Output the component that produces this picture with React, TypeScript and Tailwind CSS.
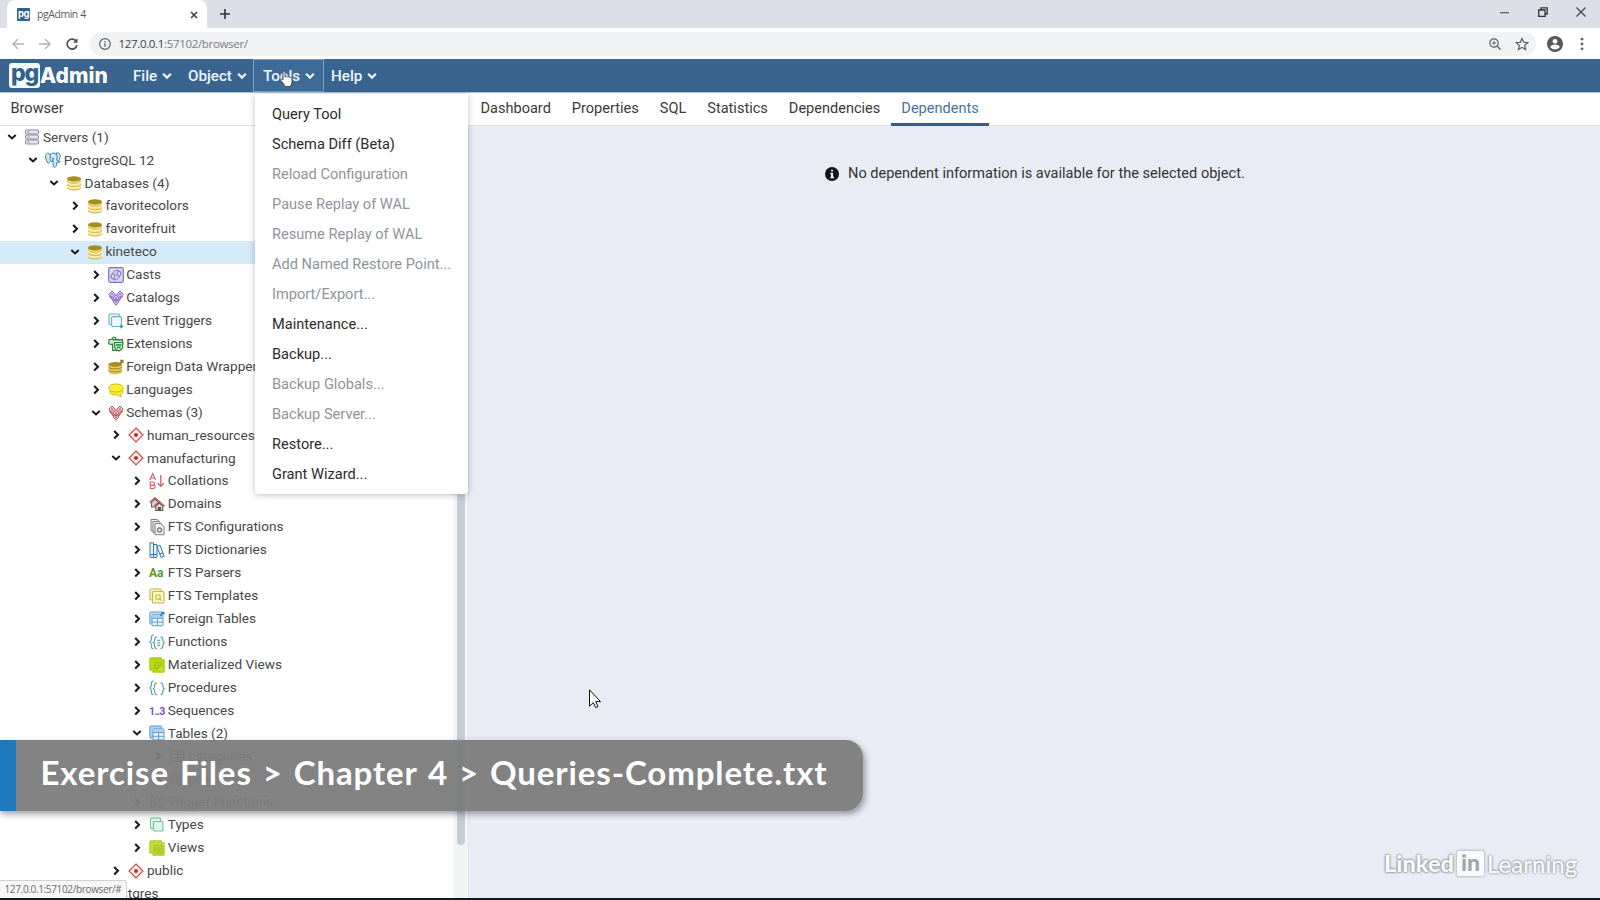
import type { ReactNode } from 'react';

type IconName =
  | 'servers' | 'postgres' | 'database' | 'casts' | 'catalogs' | 'events' | 'extensions' | 'fdw' | 'languages'
  | 'schemas' | 'schema' | 'collations' | 'domains' | 'ftsconf' | 'ftsdict' | 'ftsparser' | 'ftstemplate'
  | 'ftables' | 'functions' | 'mviews' | 'procedures' | 'sequences' | 'tables' | 'table' | 'triggers' | 'types' | 'views';

type Node = { level: number; open?: boolean; icon: IconName; label: string; selected?: boolean };

const tree: Node[] = [
  { level: 0, open: true, icon: 'servers', label: 'Servers (1)' },
  { level: 1, open: true, icon: 'postgres', label: 'PostgreSQL 12' },
  { level: 2, open: true, icon: 'database', label: 'Databases (4)' },
  { level: 3, icon: 'database', label: 'favoritecolors' },
  { level: 3, icon: 'database', label: 'favoritefruit' },
  { level: 3, open: true, icon: 'database', label: 'kineteco', selected: true },
  { level: 4, icon: 'casts', label: 'Casts' },
  { level: 4, icon: 'catalogs', label: 'Catalogs' },
  { level: 4, icon: 'events', label: 'Event Triggers' },
  { level: 4, icon: 'extensions', label: 'Extensions' },
  { level: 4, icon: 'fdw', label: 'Foreign Data Wrappers' },
  { level: 4, icon: 'languages', label: 'Languages' },
  { level: 4, open: true, icon: 'schemas', label: 'Schemas (3)' },
  { level: 5, icon: 'schema', label: 'human_resources' },
  { level: 5, open: true, icon: 'schema', label: 'manufacturing' },
  { level: 6, icon: 'collations', label: 'Collations' },
  { level: 6, icon: 'domains', label: 'Domains' },
  { level: 6, icon: 'ftsconf', label: 'FTS Configurations' },
  { level: 6, icon: 'ftsdict', label: 'FTS Dictionaries' },
  { level: 6, icon: 'ftsparser', label: 'FTS Parsers' },
  { level: 6, icon: 'ftstemplate', label: 'FTS Templates' },
  { level: 6, icon: 'ftables', label: 'Foreign Tables' },
  { level: 6, icon: 'functions', label: 'Functions' },
  { level: 6, icon: 'mviews', label: 'Materialized Views' },
  { level: 6, icon: 'procedures', label: 'Procedures' },
  { level: 6, icon: 'sequences', label: 'Sequences' },
  { level: 6, open: true, icon: 'tables', label: 'Tables (2)' },
  { level: 7, icon: 'table', label: 'categories' },
  { level: 7, icon: 'table', label: 'products' },
  { level: 6, icon: 'triggers', label: 'Trigger Functions' },
  { level: 6, icon: 'types', label: 'Types' },
  { level: 6, icon: 'views', label: 'Views' },
  { level: 5, icon: 'schema', label: 'public' },
  { level: 3, icon: 'database', label: 'postgres' },
];

const menuItems: { label: string; disabled?: boolean }[] = [
  { label: 'Query Tool' },
  { label: 'Schema Diff (Beta)' },
  { label: 'Reload Configuration', disabled: true },
  { label: 'Pause Replay of WAL', disabled: true },
  { label: 'Resume Replay of WAL', disabled: true },
  { label: 'Add Named Restore Point...', disabled: true },
  { label: 'Import/Export...', disabled: true },
  { label: 'Maintenance...' },
  { label: 'Backup...' },
  { label: 'Backup Globals...', disabled: true },
  { label: 'Backup Server...', disabled: true },
  { label: 'Restore...' },
  { label: 'Grant Wizard...' },
];

const tabs = ['Dashboard', 'Properties', 'SQL', 'Statistics', 'Dependencies', 'Dependents'];

const disks = (
  <>
    <path d="M1 3.8v8.6c0 1.7 3.1 2.8 7 2.8s7-1.1 7-2.8V3.8z" fill="#f3e28a" />
    <path d="M1 7.2c1 1.4 3.7 2 7 2s6-.6 7-2M1 10.7c1 1.4 3.7 2 7 2s6-.6 7-2" fill="none" stroke="#fffbe0" strokeWidth="1.1" />
    <path d="M1 6.2c1 1.4 3.7 2 7 2s6-.6 7-2M1 9.7c1 1.4 3.7 2 7 2s6-.6 7-2M1 13c1 1.4 3.7 2 7 2s6-.6 7-2" fill="none" stroke="#cdb44a" strokeWidth=".9" />
    <ellipse cx="8" cy="3.9" rx="7" ry="2.7" fill="#a98c1a" />
  </>
);

const cluster = (line: string, fill: string) => (
  <g fill={fill} stroke={line} strokeWidth="1">
    <path d="M1.500 5.500 8 14 14.500 5.500" fill="none" strokeWidth="1.600" />
    <path d="M4 1 7.200 4.200 4 7.400.800 4.200zM12 1l3.200 3.200L12 7.400 8.800 4.200zM8 4.800l3 3.100-3 3.100-3-3.100zM8 9.300l2.900 2.900L8 15.200l-2.900-3z" />
    <g fill={line} stroke="none">
      <circle cx="4" cy="4.200" r=".9" /><circle cx="12" cy="4.200" r=".9" /><circle cx="8" cy="7.900" r=".9" /><circle cx="8" cy="12.200" r=".9" />
    </g>
  </g>
);

const grid = (x: number, y: number) => (
  <g transform={`translate(${x} ${y})`}>
    <rect x=".5" y=".5" width="11" height="11" rx="1" fill="#eaf5fd" stroke="#5a9fd4" />
    <path d="M1 1h10v2.6H1z" fill="#a9d3f2" />
    <path d="M.5 4h11M.5 7.8h11M6 4v7.5" stroke="#5a9fd4" fill="none" />
  </g>
);

const braces = (inner: ReactNode) => (
  <g fill="none" stroke="#63a4b2" strokeWidth="1.2" strokeLinecap="round">
    <path d="M4.200 1.200C2.200 1.200 2.400 3 2.400 5S2 7.500.800 8c1.200.5 1.600 1 1.600 3s-.2 3.600 1.800 3.600" />
    <path d="M7.500 2.800C5.600 3.200 5.600 4.800 5.600 6.200S5.200 8.400 4.300 8.800c.9.400 1.300 1 1.300 2.400s0 3 1.900 3.400M12 2.800c1.900.4 1.900 2 1.900 3.400s.4 2.200 1.300 2.600c-.9.400-1.300 1-1.300 2.400s0 3-1.900 3.400" />
    {inner}
  </g>
);

const drawings: Record<IconName, ReactNode> = {
  servers: (
    <g fill="#e9e4f1" stroke="#8d869f" strokeWidth="1">
      <rect x="1.500" y="1" width="13" height="4" rx="1" />
      <rect x="1.500" y="6" width="13" height="4" rx="1" />
      <rect x="1.500" y="11" width="13" height="4" rx="1" />
      <path d="M3.500 3h2M3.500 8h2M3.500 13h2" strokeWidth="1.200" />
    </g>
  ),
  postgres: (
    <g fill="#d5e9f5" stroke="#3d7ea8" strokeWidth="1" strokeLinejoin="round">
      <path d="M2.500 1.200C.300 2 .300 4.500 1 7c.600 2.300 1.600 4.500 2.600 4.200.700-.200 1-1.200 1.700-1.900L6 3z" />
      <path d="M11 1c3-.500 4.700 1 4.200 3.500-.400 2.200-1.500 4.200-2.500 5.500l-1.500-1z" />
      <path d="M5.500 2.200C6.500.900 9.500.600 11 2c1.300 1.300 1.300 4 .700 6 .9 1.400 2.500 1.700 3.600 1.500-.700 1.200-2.500 1.200-3.500 1-.300 2-.200 4-1.500 4.700-1.500.600-2.200-.700-2.200-2.200V9.500C6.500 9.800 5 9 5 7.200z" />
      <path d="M8 9V5.500M9.800 3.600h.3" fill="none" strokeWidth="1.300" />
    </g>
  ),
  database: disks,
  casts: (
    <g fill="none" stroke="#7f70c6" strokeWidth="1">
      <rect x=".700" y=".700" width="14.600" height="14.600" rx="1.500" fill="#dcd8f5" strokeWidth="1.200" />
      <path d="M4.500 6.500C6 3.500 8 3 10.500 4M10.500 4 8.800 2.600M11.500 9.500C10 12.500 8 13 5.500 12M5.500 12l1.700 1.400" />
      <ellipse cx="5" cy="9.200" rx="1.800" ry="2.500" transform="rotate(20 5 9.200)" />
      <ellipse cx="11" cy="6.800" rx="1.800" ry="2.500" transform="rotate(20 11 6.800)" />
    </g>
  ),
  catalogs: cluster('#8768c4', '#d9c9f3'),
  events: (
    <g fill="#eefafc" stroke="#63b0c2" strokeWidth="1.100">
      <rect x="1" y="1" width="10.500" height="10.500" rx="1.200" />
      <path d="M13.500 7V4.800c0-.8-.4-1.200-1.200-1.200H4.800c-.8 0-1.200.4-1.200 1.200v7.500c0 .8.400 1.200 1.200 1.200h9" />
      <path d="M13.500 6v7.500" />
      <path d="m12.500 11.300 2.700 2.200-2.700 2.200z" fill="#2d7f95" stroke="none" />
    </g>
  ),
  extensions: (
    <g fill="#cdeccd" stroke="#2f8341" strokeWidth="1.200">
      <path d="M1 3.500h3c0-3 4-3 4 0h6.500v4H11v6.800H4.500V8.200c-4 1-4.500-1.700-3.500-2.200z" />
      <path d="M6.500 6.500h8.300v3.600c-.2 2.500-1.600 4-4 4.800-2.600-.8-4-2.300-4.300-4.800z" />
      <path d="M4.500 3.800h9.800M8 9h5.500M9 11.500h3.500" fill="none" strokeWidth="1.400" />
    </g>
  ),
  fdw: (
    <>
      <path d="M.500 5.500V13c0 1.500 3 2.500 6.700 2.500s6.700-1 6.700-2.500V5.500z" fill="#e5c95e" />
      <path d="M.500 8c1 1.300 3.500 1.900 6.700 1.900s5.700-.6 6.700-1.900M.500 11c1 1.300 3.500 1.900 6.700 1.900s5.700-.6 6.700-1.900" fill="none" stroke="#a0841f" strokeWidth="1" />
      <ellipse cx="7.200" cy="5.400" rx="6.700" ry="2.300" fill="#a98c1a" />
      <path d="M11.500.800h4v4L14.200 3.500l-2 1.800-1.200-1.200 1.900-1.900z" fill="#8f7414" />
    </>
  ),
  languages: (
    <g fill="#fbee35" stroke="#d0bd10" strokeWidth="1">
      <path d="M8 6c4 0 7 1.300 7 3.500 0 1.500-1 2.500-2.500 3l.5 2.300-3.500-1.900C5 13 1.500 12 1.500 9.500z" />
      <path d="M8 2c4 0 7.200 1.600 7.200 4S12 10 8 10 .800 8.400.800 6 4 2 8 2z" />
    </g>
  ),
  schemas: cluster('#c0575a', '#f3cfcf'),
  schema: (
    <>
      <path d="M8 1l7 7-7 7-7-7z" fill="#fbe9e8" stroke="#c2504f" strokeWidth="1.200" />
      <rect x="6.200" y="6.200" width="3.600" height="3.600" rx="1" fill="#b02a2a" />
    </>
  ),
  collations: (
    <>
      <g fill="none" stroke="#cf6060" strokeWidth="1.100">
        <path d="M.800 7 3.700.500 6.600 7M1.800 5h3.800" />
        <path d="M1.300 9v6.500h2.900c2.600 0 2.600-3.400 0-3.400H1.300h2.500c2.300 0 2.300-3.100 0-3.100z" />
      </g>
      <path d="M11.800 2v11M8.800 10.300l3 3 3-3" fill="none" stroke="#d35f5f" strokeWidth="1.300" />
    </>
  ),
  domains: (
    <g strokeWidth="1.100">
      <path d="M2.500 6v5h7V6L6 3z" fill="#d8d0d0" stroke="#6e6464" />
      <path d="M.700 6.500 6 1.800l5.300 4.700" fill="none" stroke="#c25a5a" strokeWidth="1.400" />
      <path d="M6.800 10v4.500h7V10L10.300 7z" fill="#e8e2e0" stroke="#5d5555" />
      <path d="M5 10.300 10.300 5.600l5.300 4.700" fill="none" stroke="#c25a5a" strokeWidth="1.400" />
      <path d="M9.300 14.500v-3h2v3" fill="#6a4f4f" stroke="#5d4444" />
    </g>
  ),
  ftsconf: (
    <g fill="#f3f3f3" stroke="#7d7d7d" strokeWidth="1">
      <path d="M2 .500h6l2.500 2v9.200H2z" />
      <path d="M4 2.500h6l2 2v9H4z" />
      <path d="M6 4.500h5.500L15 7.500v8.200H6z" />
      <circle cx="10.500" cy="11" r="2" strokeWidth="1.300" />
    </g>
  ),
  ftsdict: (
    <g fill="#eaf4fb" stroke="#3d79a8" strokeWidth="1">
      <path d="M1 .800h3.500v14.500H1zM4.500 2.500H8v12.800H4.500z" />
      <path d="m8 4.500 3.200-1.100 4 11-3.200 1.100z" />
      <path d="M1 12.500h7M4.500 12.500M10.800 12l3.200-1.100" />
    </g>
  ),
  ftsparser: <text x="0" y="12.300" className="font-['Roboto'] text-[12px] font-bold" fill="#5f961b">Aa</text>,
  ftstemplate: (
    <g fill="#fbf7c4" stroke="#c7b93a" strokeWidth="1.100">
      <rect x="1" y="1" width="11" height="11" rx="1" />
      <rect x="3.500" y="3.500" width="11.500" height="11.500" rx="1" />
      <circle cx="9" cy="9" r="2.300" />
      <path d="m10.600 10.600 2 2" />
    </g>
  ),
  ftables: (
    <>
      <rect x=".800" y="1" width="12" height="12" rx="1" fill="#bfdff6" stroke="#5a9fd4" />
      {grid(2.500, 3.300)}
      <path d="M12 .800h3.500v3.500l-1.200-1.200L12 5.400l-1.200-1.200 2.300-2.300z" fill="#2f7ab8" />
    </>
  ),
  functions: braces(<path d="M8.300 6.300h3M8.300 8.800h3M8.300 11.300h3" strokeWidth="1.200" strokeLinecap="butt" />),
  mviews: (
    <>
      <path d="M.800 2c0-.8.4-1.200 1.200-1.200h10.500v2h2.700v12.400H3.800v-2h-3z" fill="#b6d80e" stroke="#a9cb16" />
      <path d="M6 11.500V7c0-1 .5-1.500 1.500-1.500h3c1 0 1.500.5 1.500 1.500v1.500H9v3z" fill="none" stroke="#98b812" />
      <path d="M9.500 12.500h6M12.500 10v5.500" stroke="#cbe35c" />
    </>
  ),
  procedures: braces(null),
  sequences: <text x="0" y="12" className="font-['Roboto'] text-[10.500px] font-bold tracking-[-0.600px]" fill="#7a4fc0">1..3</text>,
  tables: (
    <>
      <rect x=".800" y="1" width="12" height="12" rx="1" fill="#a9d3f2" stroke="#5a9fd4" />
      {grid(3.500, 3.500)}
    </>
  ),
  table: (
    <g fill="none" stroke="#444" strokeWidth="1.100">
      <rect x="1" y="3" width="13" height="10" rx="1" />
      <path d="M1 6.300h13M1 9.700h13M7.500 6.300V13" />
    </g>
  ),
  triggers: (
    <g fill="none" stroke="#33555e" strokeWidth="1.200">
      <path d="M4 1.500C2 2 2 4 2 5.500S1.500 8 .8 8c.7 0 1.200 1 1.200 2.500S2 14 4 14.500M11 1.500c2 .5 2 2.500 2 4S13.500 8 14.500 8" />
      <path d="M5.500 5h5v5h-5zM9 13h5m-2-2 2.500 2L12 15" />
    </g>
  ),
  types: (
    <g fill="#e2f8ec" stroke="#69c79a" strokeWidth="1.100">
      <path d="M1.500 2c0-.6.300-1 1-1h8c.6 0 1 .4 1 1v2.500h-7v7h-2c-.7 0-1-.4-1-1z" />
      <rect x="4.500" y="4.500" width="9.500" height="9.500" rx="1" />
    </g>
  ),
  views: (
    <>
      <path d="M.800 2c0-.8.4-1.200 1.200-1.200h10.500v2h2.700v12.400H3.800v-2h-3z" fill="#bedb3a" stroke="#aecb25" />
      <rect x="5.500" y="5.500" width="7.500" height="7.500" rx="1" fill="none" stroke="#9dbb22" />
      <rect x="7.800" y="7.800" width="3" height="3" fill="none" stroke="#9dbb22" />
    </>
  ),
};

function Chevron({ open }: { open?: boolean }) {
  return (
    <svg viewBox="0 0 10 10" className="h-2.5 w-2.5 shrink-0" fill="none" stroke="#1b1b1b" strokeWidth="2.100">
      {open ? <path d="M1.300 3 5 6.400 8.700 3" /> : <path d="M3.200 1 7 4.800 3.200 8.600" />}
    </svg>
  );
}

function TreeRow({ node }: { node: Node }) {
  return (
    <div
      className={`flex h-[22.93px] shrink-0 items-center whitespace-nowrap ${node.selected ? 'bg-[#d5ebf9]' : ''}`}
      style={{ paddingLeft: 7.3 + node.level * 20.8 }}
    >
      <Chevron open={node.open} />
      <svg viewBox="0 0 16 16" className="mr-[2.500px] ml-[7.200px] h-4 w-4 shrink-0 overflow-visible">{drawings[node.icon]}</svg>
      <span className="text-[13.6px] leading-none text-[#474747]">{node.label}</span>
    </div>
  );
}

function NavItem({ label, className }: { label: string; className?: string }) {
  return (
    <div className={`flex h-[33px] items-center gap-[5px] text-[15.200px] font-medium text-[#f1f5f9] ${className ?? ''}`}>
      <span className="pt-[1.500px]">{label}</span>
      <svg viewBox="0 0 10 8" className="mt-px h-2 w-2.5" fill="none" stroke="#f1f5f9" strokeWidth="2.200">
        <path d="M1.100 1.800 5 5.600l3.900-3.800" />
      </svg>
    </div>
  );
}

function BrowserChrome() {
  return (
    <>
      <div className="flex h-7 shrink-0 bg-[#dcdfe7] pl-[7px]">
        <div className="flex w-[200px] items-center rounded-t-lg bg-white pl-[10px]">
          <div className="mt-px flex h-[13px] w-[13px] items-center justify-center rounded-[1px] bg-[#2f618f] pb-[2px] font-['Inter'] text-[9.500px] leading-none font-bold tracking-[-0.500px] text-white">pg</div>
          <span className="mt-px ml-[7px] w-[50px] font-['Open_Sans'] text-[10.500px] tracking-[-0.450px] whitespace-nowrap text-[#5a5a5a]">pgAdmin 4</span>
          <svg viewBox="0 0 8 8" className="mt-px ml-[102.500px] h-2 w-2" stroke="#3c3c3c" strokeWidth="1.500"><path d="m1 1 6 6M7 1 1 7" /></svg>
        </div>
        <svg viewBox="0 0 10 10" className="mt-[9px] ml-[13px] h-[10px] w-[10px]" stroke="#333" strokeWidth="1.600"><path d="M5 0v10M0 5h10" /></svg>
        <div className="ml-auto flex h-6 items-center pr-[14px]">
          <svg viewBox="0 0 9 9" className="mr-[29px] h-[9px] w-[9px]" stroke="#555" strokeWidth="1.200"><path d="M0 4.700h9" /></svg>
          <svg viewBox="0 0 10 10" className="mr-[28px] h-[10px] w-[10px]" fill="none" stroke="#333" strokeWidth="1.300"><path d="M.700 3h6.300v6.300H.700zM3 3V.800h6.200V7H7" /></svg>
          <svg viewBox="0 0 10 10" className="h-[10px] w-[10px]" stroke="#444" strokeWidth="1.300"><path d="m.500.500 9 9M9.500.500l-9 9" /></svg>
        </div>
      </div>
      <div className="flex h-[31px] shrink-0 items-center bg-white">
        <svg viewBox="0 0 12 12" className="ml-3 h-3 w-3" fill="none" stroke="#b0b2b5" strokeWidth="1.400"><path d="M12 6H1M6 1 1 6l5 5" /></svg>
        <svg viewBox="0 0 12 12" className="ml-[15px] h-3 w-3" fill="none" stroke="#b0b2b5" strokeWidth="1.400"><path d="M0 6h11M6 1l5 5-5 5" /></svg>
        <svg viewBox="0 0 12 12" className="ml-[15px] h-3 w-3" fill="none" stroke="#4c4f53" strokeWidth="1.700"><path d="M10.300 3.300A5 5 0 1 0 11 7.200" /><path d="M11.500.300v4.500H7z" fill="#4c4f53" stroke="none" /></svg>
        <div className="ml-3 flex h-6 w-[1446px] items-center rounded-full bg-[#f0f2f3] pl-[9px]">
          <svg viewBox="0 0 12 12" className="h-3 w-3" fill="none" stroke="#606468" strokeWidth="1.200"><circle cx="6" cy="6" r="5.300" /><path d="M6 5.200v3.600M6 3v1.200" strokeWidth="1.400" /></svg>
          <span className="ml-[7.500px] font-['Open_Sans'] text-[11.500px] tracking-[-0.330px] text-[#7a7c7f]"><span className="text-[#3e4043]">127.0.0.1</span>:57102/browser/</span>
          <svg viewBox="0 0 12 12" className="ml-auto h-3 w-3" fill="none" stroke="#606468" strokeWidth="1.200"><circle cx="5" cy="5" r="4.200" /><path d="m8 8 3.500 3.500" strokeWidth="1.500" /><path d="M5 3v4M3 5h4" strokeWidth="1" /></svg>
          <svg viewBox="0 0 24 24" className="mr-[7px] ml-[14px] h-[14px] w-[14px]" fill="none" stroke="#55585c" strokeWidth="2"><path d="m12 2.500 2.800 6.600 7.200.600-5.500 4.700 1.700 7L12 17.700l-6.200 3.700 1.700-7L2 9.700l7.200-.6z" /></svg>
        </div>
        <svg viewBox="0 0 16 16" className="ml-[11px] h-4 w-4"><circle cx="8" cy="8" r="8" fill="#55585c" /><circle cx="8" cy="5.300" r="2.400" fill="#fff" /><path d="M3.200 11c.8-1.700 3-2.400 4.800-2.400s4 .7 4.800 2.400c-1 1.500-2.800 2.300-4.800 2.300S4.200 12.500 3.200 11z" fill="#fff" /></svg>
        <svg viewBox="0 0 4 14" className="ml-[17px] h-3.5 w-1" fill="#5f6368"><circle cx="2" cy="2.200" r="1.400" /><circle cx="2" cy="7" r="1.400" /><circle cx="2" cy="11.800" r="1.400" /></svg>
      </div>
    </>
  );
}

function Header() {
  return (
    <div className="flex h-[34px] shrink-0 border-b border-[#a3c3d3] bg-[#39648f]">
      <div className="mt-[4px] ml-[9px] flex h-[25px] w-[100px]">
        <div className="flex w-[31px] justify-center rounded-[3px] bg-[#f7fafc] font-['Inter'] text-[23px] leading-[21px] font-extrabold tracking-[-1.200px] text-[#2e628f]">pg</div>
        <div className="font-['Inter'] text-[21px] leading-[25px] font-extrabold tracking-[0.050px] text-white">Admin</div>
      </div>
      <NavItem label="File" className="ml-[24px] w-[55px]" />
      <NavItem label="Object" className="w-[65px]" />
      <NavItem label="Tools" className="w-[71px] border border-[#7ea2c0] bg-[#3d6a97] pl-[9px]" />
      <NavItem label="Help" className="ml-[7px]" />
    </div>
  );
}

function ToolsMenu() {
  return (
    <div className="absolute top-[94px] left-[255px] z-10 flex h-[400px] w-[213px] flex-col rounded-b-[4px] bg-white pt-[6px] shadow-[0_1px_6px_rgba(60,70,90,0.350)]">
      {menuItems.map((m) => (
        <div key={m.label} className={`flex h-[30px] items-center pl-[17px] text-[14.600px] whitespace-nowrap ${m.disabled ? 'text-[#8e959b]' : 'text-[#2c2c2c]'}`}>
          {m.label}
        </div>
      ))}
    </div>
  );
}

export default function App() {
  return (
    <div className="relative flex h-[900px] w-[1600px] flex-col overflow-hidden border-b-2 border-[#15171a] bg-white font-['Roboto',sans-serif]">
      <BrowserChrome />
      <Header />
      <div className="flex min-h-0 flex-1">
        <div className="flex w-[469px] shrink-0 flex-col">
          <div className="flex h-[33px] shrink-0 items-center border-b border-[#dfe2ea] pl-[10.500px] text-[14.550px] text-[#3a3a3a]">Browser</div>
          <div className="flex min-h-0 flex-1">
            <div className="flex w-[453px] flex-col overflow-hidden">
              {tree.map((n, i) => <TreeRow key={i} node={n} />)}
            </div>
            <div className="w-[16px] border-r border-[#dfe3ea] bg-[#f2f4f6] pl-1">
              <div className="h-[719px] w-2 rounded-b-full bg-[#c5ccd6]" />
            </div>
          </div>
        </div>
        <div className="flex flex-1 flex-col">
          <div className="flex h-[33px] shrink-0 border-b border-[#dfe2ea] bg-white pl-px text-[14.550px] text-[#3a3a3a]">
            {tabs.map((t) => (
              <div key={t} className={`flex h-[33px] items-center border-b-[3px] px-[10.500px] pt-[2px] ${t === 'Dependents' ? 'border-[#2f5f90] text-[#48719c]' : 'border-transparent'}`}>{t}</div>
            ))}
          </div>
          <div className="flex-1 bg-[#e9ecf4]">
            <div className="flex items-center pt-[40px] pl-[356px] text-[14.550px] leading-4 text-[#333]">
              <svg viewBox="0 0 14 14" className="mr-[9px] mb-px h-[14px] w-[14px]"><circle cx="7" cy="7" r="7" fill="#151515" /><path d="M5.300 5.800h2.800v4h.9v1.400H5.200V9.800H6V7.200h-.7zM6.100 2.700H8v1.900H6.100z" fill="#eceff6" /></svg>
              No dependent information is available for the selected object.
            </div>
          </div>
        </div>
      </div>

      <ToolsMenu />

      <svg viewBox="0 0 16 18" className="absolute top-[70px] left-[279px] z-20 h-[18px] w-4">
        <path d="M4.500 1c1.200 0 1.500.8 1.500 1.800v4c.5-.8 2.200-.6 2.400.3.700-.7 2-.4 2.200.5.8-.4 2.400 0 2.400 1.200 0 2.500 0 5.500-2 7.700H6.200C5 14 3.200 12.200 2 10.600c-.6-1 .6-2 1.500-1.200L4 10V2.800C4 1.800 3.800 1 4.500 1z" fill="#fff" stroke="#3a4654" strokeWidth=".9" />
      </svg>

      <svg viewBox="0 0 12 19" className="absolute top-[689px] left-[589px] h-[19px] w-3 overflow-visible">
        <path d="M.500.800v16.400l3.800-3.600 2.400 5 2.300-1-2.300-5h4.800z" fill="#fff" stroke="#111" />
      </svg>

      <div className="absolute top-[740px] left-0 z-20 flex h-[71px] w-[864px] items-center rounded-r-[18px] border-r border-[#b4b6ba] bg-[#7c7c7c]/95 shadow-[1px_3px_6px_rgba(40,40,50,0.450)]">
        <div className="h-full w-4 bg-[#1f78ba]" />
        <div className="ml-[24.500px] pb-[7px] font-['Lato'] text-[33px] leading-none font-bold tracking-[0.900px] whitespace-nowrap text-white [word-spacing:2px]">Exercise Files &gt; Chapter 4 &gt; Queries-Complete.txt</div>
      </div>

      <div className="absolute top-[851px] left-[1384px] flex h-[26px] items-center font-['Lato'] text-[24px] leading-none text-[#fbfbfd] [text-shadow:0_0_2px_#8a8d94,0_0_2px_#8a8d94,0_0_3px_#a0a3aa]">
        <span className="w-[73px] text-[23.500px] font-black">Linked</span>
        <span className="mr-[3px] mb-[2px] flex h-[25px] w-[27px] items-center justify-center rounded-[2px] bg-[#fafbfd] pb-[2px] text-[23px] font-black text-[#a3a6ad] shadow-[0_0_3px_#85888f] [text-shadow:none]">in</span>
        <span className="tracking-[0.050px] [-webkit-text-stroke:0.300px_#fbfbfd]">Learning</span>
      </div>

      <div className="absolute bottom-0 left-0 z-20 flex h-[18px] w-[127px] items-center rounded-tr-[3px] border-t border-r border-[#d0d2d5] bg-[#f7f7f8] pl-[4.500px] font-['Open_Sans'] text-[10px] tracking-[-0.350px] whitespace-nowrap text-[#6a6a6a]">127.0.0.1:57102/browser/#</div>
    </div>
  );
}
